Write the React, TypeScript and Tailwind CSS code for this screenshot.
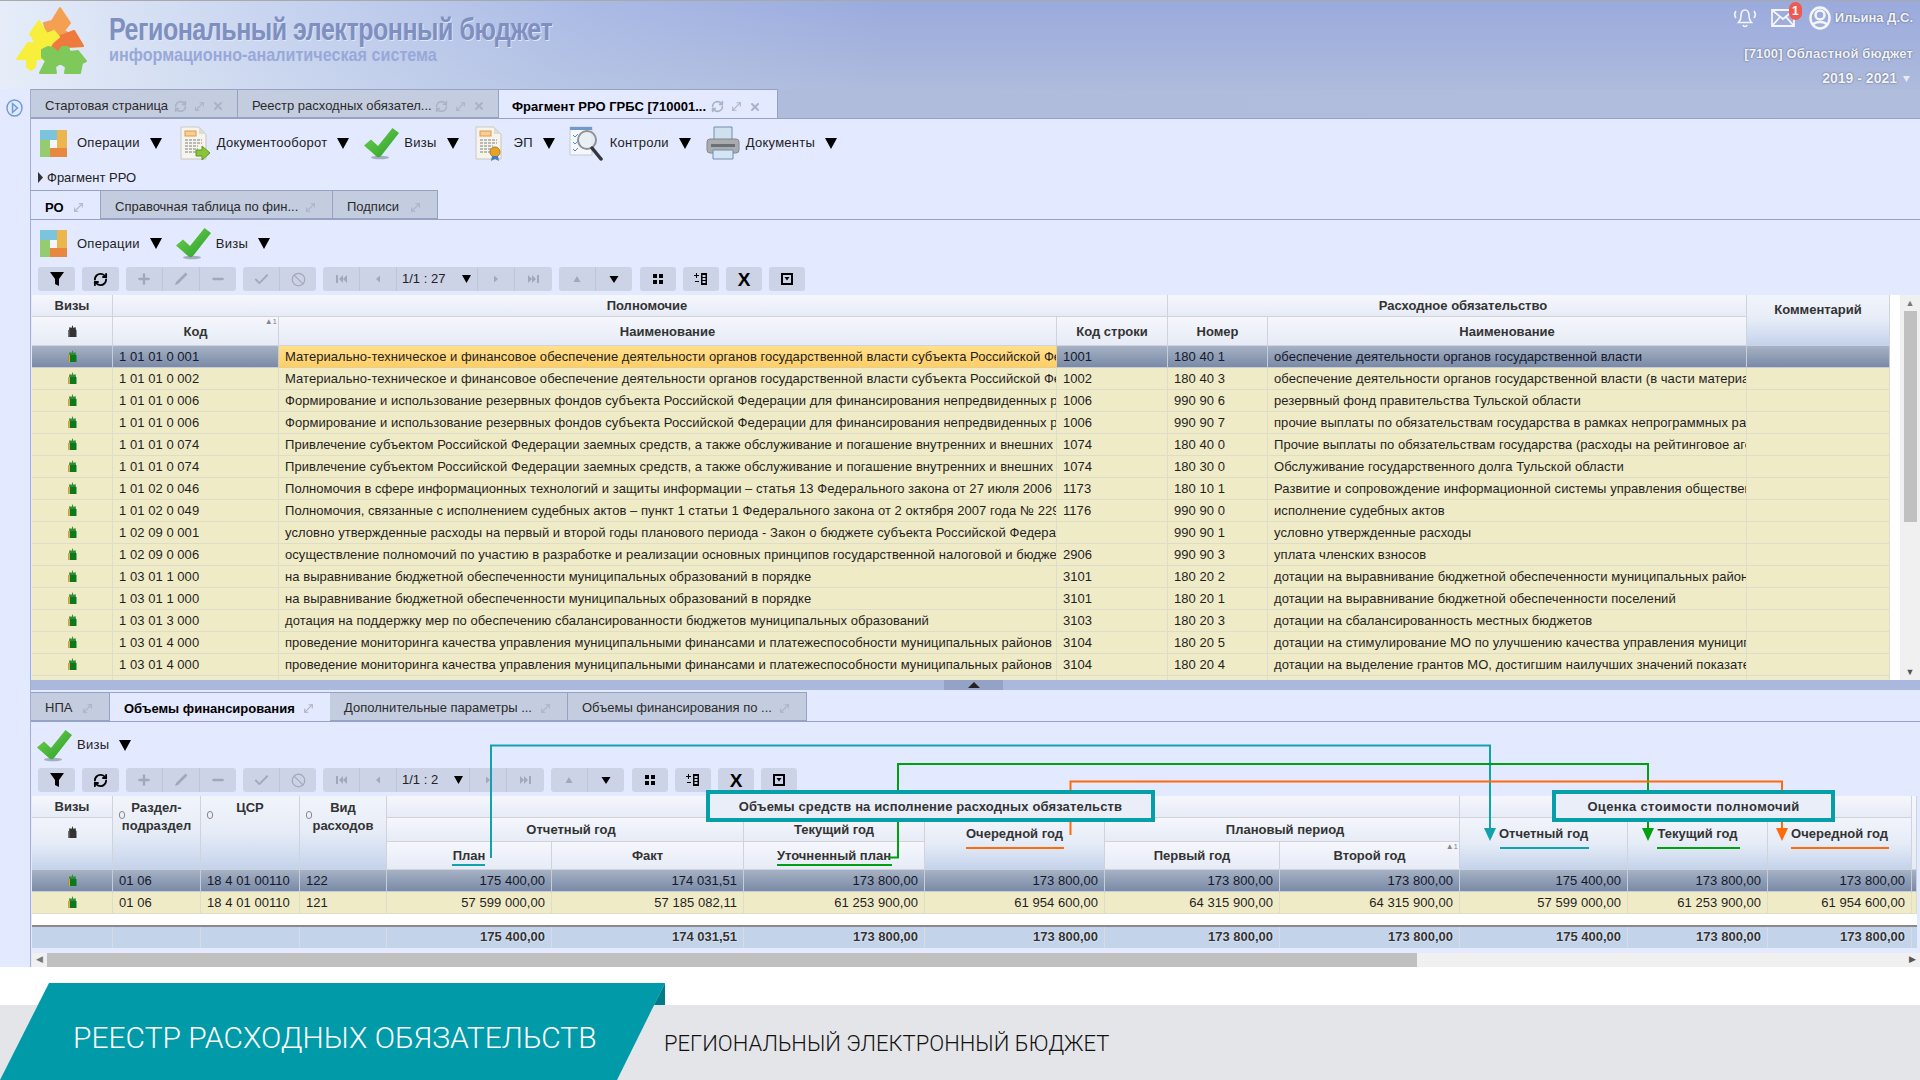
import type { ReactNode } from 'react';
import { RefreshCw, MoveDiagonal, X, Plus, Minus, Check, Ban } from 'lucide-react';

const UPPER_ROWS = [
  ['1 01 01 0 001', 'Материально-техническое и финансовое обеспечение деятельности органов государственной власти субъекта Российской Федерации', '1001', '180 40 1', 'обеспечение деятельности органов государственной власти'],
  ['1 01 01 0 002', 'Материально-техническое и финансовое обеспечение деятельности органов государственной власти субъекта Российской Федерации', '1002', '180 40 3', 'обеспечение деятельности органов государственной власти (в части материального обеспечения)'],
  ['1 01 01 0 006', 'Формирование и использование резервных фондов субъекта Российской Федерации для финансирования непредвиденных расходов', '1006', '990 90 6', 'резервный фонд правительства Тульской области'],
  ['1 01 01 0 006', 'Формирование и использование резервных фондов субъекта Российской Федерации для финансирования непредвиденных расходов', '1006', '990 90 7', 'прочие выплаты по обязательствам государства в рамках непрограммных расходов'],
  ['1 01 01 0 074', 'Привлечение субъектом Российской Федерации заемных средств, а также обслуживание и погашение внутренних и внешних  долговых обязательств', '1074', '180 40 0', 'Прочие выплаты по обязательствам государства (расходы на рейтинговое агентство)'],
  ['1 01 01 0 074', 'Привлечение субъектом Российской Федерации заемных средств, а также обслуживание и погашение внутренних и внешних  долговых обязательств', '1074', '180 30 0', 'Обслуживание государственного долга Тульской области'],
  ['1 01 02 0 046', 'Полномочия в сфере информационных технологий и защиты информации – статья 13 Федерального закона от 27 июля 2006 года', '1173', '180 10 1', 'Развитие и сопровождение информационной системы управления общественными финансами'],
  ['1 01 02 0 049', 'Полномочия, связанные с исполнением судебных актов – пункт 1 статьи 1 Федерального закона от 2 октября 2007 года № 229-ФЗ', '1176', '990 90 0', 'исполнение судебных актов'],
  ['1 02 09 0 001', 'условно утвержденные расходы на первый и второй годы планового периода -  Закон о бюджете субъекта Российской Федерации', '', '990 90 1', 'условно утвержденные расходы'],
  ['1 02 09 0 006', 'осуществление полномочий по участию в разработке и реализации основных принципов государственной налоговой и бюджетной политики', '2906', '990 90 3', 'уплата членских взносов'],
  ['1 03 01 1 000', 'на выравнивание бюджетной обеспеченности муниципальных образований в порядке', '3101', '180 20 2', 'дотации на выравнивание бюджетной обеспеченности муниципальных районов'],
  ['1 03 01 1 000', 'на выравнивание бюджетной обеспеченности муниципальных образований в порядке', '3101', '180 20 1', 'дотации на выравнивание бюджетной обеспеченности поселений'],
  ['1 03 01 3 000', 'дотация на поддержку мер по обеспечению сбалансированности бюджетов муниципальных образований', '3103', '180 20 3', 'дотации на сбалансированность местных бюджетов'],
  ['1 03 01 4 000', 'проведение мониторинга качества управления муниципальными финансами и платежеспособности муниципальных районов', '3104', '180 20 5', 'дотации на стимулирование МО по улучшению качества управления муниципальными финансами'],
  ['1 03 01 4 000', 'проведение мониторинга качества управления муниципальными финансами и платежеспособности муниципальных районов', '3104', '180 20 4', 'дотации на выделение грантов МО, достигшим наилучших значений показателей'],
  ['', '', '', '', ''],
];

const LOWER_ROWS = [
  ['01 06', '18 4 01 00110', '122', '175 400,00', '174 031,51', '173 800,00', '173 800,00', '173 800,00', '173 800,00', '175 400,00', '173 800,00', '173 800,00'],
  ['01 06', '18 4 01 00110', '121', '57 599 000,00', '57 185 082,11', '61 253 900,00', '61 954 600,00', '64 315 900,00', '64 315 900,00', '57 599 000,00', '61 253 900,00', '61 954 600,00'],
];

const LOWER_TOTALS = ['175 400,00', '174 031,51', '173 800,00', '173 800,00', '173 800,00', '173 800,00', '175 400,00', '173 800,00', '173 800,00'];

const HEAD = 'border-r border-b border-[#d0d3da] bg-gradient-to-b from-[#f5f7fc] to-[#e6ebf6] font-bold text-[#333] text-center p-0 pt-px relative';
const HEAD_TALL = 'border-r border-b border-[#d0d3da] bg-gradient-to-b from-[#f1f4fb] via-[#e6ecf7] to-[#c4d3eb] font-bold text-[#333] text-center p-0 relative';
const CELL = 'border-r border-b whitespace-nowrap overflow-hidden px-[6px] p-0 tracking-[0.05px]';
const SELECTED = 'border-[#c6ccd8] bg-gradient-to-b from-[#a6b2c4] to-[#7a8aa7] text-[#14182a]';
const YELLOW = 'border-[#deddc9] bg-[#f0ebc7] text-[#1f1f1f]';

function Triangle() {
  return (
    <svg width="12" height="11" viewBox="0 0 12 11" className="shrink-0">
      <path d="M0 0h12L6 11z" fill="#000" />
    </svg>
  );
}

function OperationsIcon() {
  return (
    <svg width="27" height="27" viewBox="0 0 27 27">
      <rect width="17" height="10" fill="#7cc3dc" />
      <rect x="17" width="10" height="18" fill="#ecb64e" />
      <rect y="10" width="10" height="17" fill="#94cc6f" />
      <rect x="10" y="18" width="17" height="9" fill="#e8873f" />
      <rect x="10" y="10" width="7" height="8" fill="#f4f6fb" />
    </svg>
  );
}

function CheckIcon() {
  return (
    <svg width="37" height="33" viewBox="0 0 37 33">
      <defs>
        <linearGradient id="chk" x1="0" y1="0" x2="1" y2="1">
          <stop offset="0" stopColor="#72d04c" />
          <stop offset="1" stopColor="#27a02c" />
        </linearGradient>
      </defs>
      <ellipse cx="17" cy="30.5" rx="9" ry="1.8" fill="#8a93a8" opacity="0.7" />
      <path d="M1 18.5 8 12.5 15 19 29.5 1 36 6 18 29c-1.500 1.800-3.500 1.800-5 0z" fill="url(#chk)" />
    </svg>
  );
}

function DocLines({ tail }: { tail: ReactNode }) {
  return (
    <svg width="31" height="35" viewBox="0 0 31 35">
      <path d="M1 1h18l7 7v25H1z" fill="#f6f4ec" stroke="#c9c8c0" />
      <path d="M19 1v7h7z" fill="#dcdcd6" />
      <rect x="5" y="5" width="11" height="5" fill="#f7cf95" stroke="#de9a48" />
      <path d="M5 14h17M5 17h17M5 20h13M5 23h13M5 26h11" stroke="#a7a7a2" strokeWidth="1.300" strokeDasharray="3 1" />
      {tail}
    </svg>
  );
}

function SearchIcon() {
  return (
    <svg width="36" height="35" viewBox="0 0 36 35">
      <path d="M1 1h22v28H1z" fill="#f5f7fb" stroke="#c5cad6" />
      <path d="M1 1h22v3H1z" fill="#6f9ac9" />
      <path d="M4 9l2 2 3-3M4 16l2 2 3-3M4 23l2 2 3-3" stroke="#4d8ccc" fill="none" />
      <circle cx="18" cy="14" r="9" fill="#e6edf3" fillOpacity="0.8" stroke="#8e9196" strokeWidth="2" />
      <path d="M23 22l9 11" stroke="#33363d" strokeWidth="3.500" strokeLinecap="round" />
    </svg>
  );
}

function PrinterIcon() {
  return (
    <svg width="34" height="34" viewBox="0 0 34 34">
      <path d="M8 1h18v14H8z" fill="#cfe0ef" stroke="#6f8fb0" />
      <rect x="1" y="13" width="32" height="14" rx="3" fill="#a9acaf" stroke="#85888c" />
      <rect x="5" y="18" width="24" height="3" fill="#6c6f74" />
      <path d="M7 24h20v9H7z" fill="#d5e5f3" stroke="#6f8fb0" />
    </svg>
  );
}

function MenuItem({ icon, boxClass, label, className }: { icon: ReactNode; boxClass: string; label: string; className?: string }) {
  return (
    <div className={`flex items-center ${className ?? ''}`}>
      <div className={boxClass}>{icon}</div>
      <span className="text-[#222] tracking-[0.25px]">{label}</span>
      <span className="ml-[10px]">
        <Triangle />
      </span>
    </div>
  );
}

function TabIcons({ refresh }: { refresh?: boolean }) {
  return (
    <span className="flex items-center gap-[6px] text-[#aab3c6]">
      {refresh && <RefreshCw size={13} strokeWidth={3} />}
      <MoveDiagonal size={13} strokeWidth={2} />
      {refresh && <X size={12} strokeWidth={4} />}
    </span>
  );
}

function Tab({ label, active, refresh, className }: { label: string; active?: boolean; refresh?: boolean; className: string }) {
  const look = active
    ? 'bg-[#e3e9fe] font-bold text-black border-t border-[#9aa6c8]'
    : 'bg-[#c4cddf] text-[#2a2a2a] border-t border-r border-b border-[#95a2c4]';
  return (
    <div className={`flex items-center justify-between h-full ${className} ${look}`}>
      <span className="whitespace-nowrap">{label}</span>
      <TabIcons refresh={refresh} />
    </div>
  );
}

function SvgGlyph({ d, fill }: { d: string; fill: string }) {
  return (
    <svg width="16" height="16" viewBox="0 0 16 16">
      <path d={d} fill={fill} />
    </svg>
  );
}

const GREY = '#a3a8b8';

function ToolBtn({ children, className }: { children: ReactNode; className?: string }) {
  return (
    <div className={`flex items-center justify-center h-full border-r border-[#c0c6da] last:border-r-0 ${className ?? 'flex-1'}`}>
      {children}
    </div>
  );
}

function ToolGroup({ children, className }: { children: ReactNode; className: string }) {
  return <div className={`flex h-full rounded-[3px] bg-[#cdd3e6] ${className}`}>{children}</div>;
}

function ButtonBar({ pagerClass, pagerMiddle, count }: { pagerClass: string; pagerMiddle: string; count: string }) {
  return (
    <div className="flex gap-[7px] h-[24px] pl-[7px] mb-[4px] shrink-0">
      <ToolGroup className="w-[37px]">
        <ToolBtn><SvgGlyph d="M1 1h14L10 8v7l-4-2V8z" fill="#000" /></ToolBtn>
      </ToolGroup>
      <ToolGroup className="w-[37px]">
        <ToolBtn><RefreshCw size={15} strokeWidth={3} color="#000" /></ToolBtn>
      </ToolGroup>
      <ToolGroup className="w-[110px]">
        <ToolBtn><Plus size={16} strokeWidth={3.500} color={GREY} /></ToolBtn>
        <ToolBtn><SvgGlyph d="M12.500 1.500l2 2L5 13l-3 1 1-3z" fill={GREY} /></ToolBtn>
        <ToolBtn><Minus size={16} strokeWidth={3.500} color={GREY} /></ToolBtn>
      </ToolGroup>
      <ToolGroup className="w-[73px]">
        <ToolBtn><Check size={17} strokeWidth={2.500} color={GREY} /></ToolBtn>
        <ToolBtn><Ban size={15} strokeWidth={2} color={GREY} /></ToolBtn>
      </ToolGroup>
      <ToolGroup className={pagerClass}>
        <ToolBtn className="w-[37px]"><SvgGlyph d="M3 4h2v8H3zM10 4v8L6 8zM14 4v8l-4-4z" fill={GREY} /></ToolBtn>
        <ToolBtn className="w-[37px]"><SvgGlyph d="M10 4.500v7L6 8z" fill={GREY} /></ToolBtn>
        <ToolBtn className={pagerMiddle}>
          <span className="flex-1 pl-[5px] text-[#222] whitespace-nowrap">{count}</span>
          <svg width="9" height="8" viewBox="0 0 9 8" className="mr-[6px]"><path d="M0 0h9L4.500 8z" fill="#000" /></svg>
        </ToolBtn>
        <ToolBtn className="w-[37px]"><SvgGlyph d="M6 4.500v7L10 8z" fill={GREY} /></ToolBtn>
        <ToolBtn className="w-[37px]"><SvgGlyph d="M2 4v8l4-4zM6 4v8l4-4zM11 4h2v8h-2z" fill={GREY} /></ToolBtn>
      </ToolGroup>
      <ToolGroup className="w-[73px]">
        <ToolBtn><SvgGlyph d="M8 5l3.500 6h-7z" fill={GREY} /></ToolBtn>
        <ToolBtn><SvgGlyph d="M3.500 5h9L8 12z" fill="#000" /></ToolBtn>
      </ToolGroup>
      <ToolGroup className="w-[36px] ml-px">
        <ToolBtn><SvgGlyph d="M3 3h4v4H3zM9 3h4v4H9zM3 9h4v4H3zM9 9h4v4H9z" fill="#000" /></ToolBtn>
      </ToolGroup>
      <ToolGroup className="w-[36px]">
        <ToolBtn><SvgGlyph d="M8 2h6v12H8zM9.500 4v2h3V4zM9.500 7v2h3V7zM9.500 10v2h3v-2zM1 4h2V2h1v2h2v1H4v2H3V5H1zM2 10h4v1H2z" fill="#000" /></ToolBtn>
      </ToolGroup>
      <ToolGroup className="w-[36px]">
        <ToolBtn><span className="font-bold text-[19px] text-black leading-none">X</span></ToolBtn>
      </ToolGroup>
      <ToolGroup className="w-[36px]">
        <ToolBtn><SvgGlyph d="M2 2h12v12H2zM4 4v8h8V4zM5.500 6h5L8 9.500z" fill="#000" /></ToolBtn>
      </ToolGroup>
    </div>
  );
}

function Stamp({ dark }: { dark?: boolean }) {
  return (
    <svg width="11" height="13" viewBox="0 0 11 13" className="mx-auto block">
      <path d="M5.500 0l1 3 2-1 .5 3H2l.5-3 2 1z" fill={dark ? '#333' : '#2f8d35'} />
      <rect x="1.500" y="5" width="8" height="7" fill={dark ? '#333' : '#0b7a1e'} />
      <rect x="1.500" y="5" width="1.500" height="7" fill={dark ? '#555' : '#e6a53a'} />
    </svg>
  );
}

function SortMark() {
  return <span className="absolute right-[1px] top-[1px] text-[8px] leading-none text-[#888] font-normal">▲1</span>;
}

function RingMark() {
  return <span className="absolute left-[6px] top-[15px] w-[6px] h-[8px] rounded-full border border-[#888]" />;
}

function Logo() {
  return (
    <svg width="90" height="76" viewBox="0 0 90 76" className="absolute left-0 top-0">
      <g strokeLinejoin="round" strokeWidth="2">
        <path d="M60 7 70 22 64 30 70 33 74 30 83 45 62 46 58 53 52 46 50 40 57 36 54 30 47 33 44 22 52 20z" fill="#f4a052" stroke="#f4a052" />
        <path d="M58 36 74 30 83 45 62 46 58 53 52 46z" fill="#ee7a3e" stroke="#ee7a3e" />
        <path d="M39 20 47 33 54 30 59 36 52 42 49 48 43 47 40 52 45 58 36 58 35 66 31 69 27 66 27 58 17 58 28 42 35 43 33 37 30 33z" fill="#f8ee3c" stroke="#f8ee3c" />
        <path d="M42 49 48 46 53 47 58 52 62 46 68 46 70 51 78 50 86 60 82 62 80 72 65 72 66 66 60 62 55 66 56 72 40 72 46 60 42 56z" fill="#7fc85a" stroke="#7fc85a" />
      </g>
    </svg>
  );
}

function BellIcon() {
  return (
    <svg width="24" height="22" viewBox="0 0 24 22" fill="none" stroke="#f4f5fa" strokeWidth="1.600">
      <path d="M12 3c-3 0-4 2.500-4 6 0 3-1 5-2.500 6.500h13C17 14 16 12 16 9c0-3.500-1-6-4-6z" />
      <path d="M10 18c.5 2 3.500 2 4 0M3 4C1.500 6 1.500 9 3 11M21 4c1.500 2 1.500 5 0 7" />
    </svg>
  );
}

function UpperTable() {
  return (
    <table className="table-fixed border-separate border-spacing-0 w-[1858px]">
      <colgroup>
        <col className="w-[81px]" />
        <col className="w-[166px]" />
        <col className="w-[778px]" />
        <col className="w-[111px]" />
        <col className="w-[100px]" />
        <col className="w-[479px]" />
        <col className="w-[143px]" />
      </colgroup>
      <thead>
        <tr className="h-[22px]">
          <th className={HEAD}>Визы</th>
          <th className={`${HEAD} pl-[14px]`} colSpan={3}>Полномочие</th>
          <th className={`${HEAD} pl-[12px]`} colSpan={2}>Расходное обязательство</th>
          <th className={`${HEAD_TALL} align-top pt-[5px]`} rowSpan={2}>Комментарий</th>
        </tr>
        <tr className="h-[29px]">
          <th className={HEAD}><Stamp dark /></th>
          <th className={HEAD}>Код<SortMark /></th>
          <th className={HEAD}>Наименование</th>
          <th className={HEAD}>Код строки</th>
          <th className={HEAD}>Номер</th>
          <th className={HEAD}>Наименование</th>
        </tr>
      </thead>
      <tbody>
        {UPPER_ROWS.map((row, i) => {
          const look = i === 0 ? SELECTED : YELLOW;
          return (
            <tr key={i} className="h-[22px]">
              <td className={`${CELL} ${look}`}>{row[0] !== '' && <Stamp />}</td>
              <td className={`${CELL} ${look}`}>{row[0]}</td>
              <td className={`${CELL} ${i === 0 ? 'border-[#e8cf90] bg-gradient-to-b from-[#ffe08c] to-[#ffce66] text-[#222]' : look}`}>{row[1]}</td>
              <td className={`${CELL} ${look}`}>{row[2]}</td>
              <td className={`${CELL} ${look}`}>{row[3]}</td>
              <td className={`${CELL} ${look}`}>{row[4]}</td>
              <td className={`${CELL} ${look}`} />
            </tr>
          );
        })}
      </tbody>
    </table>
  );
}

function LowerTable() {
  return (
    <table className="table-fixed border-separate border-spacing-0 w-[1885px]">
      <colgroup>
        <col className="w-[81px]" />
        <col className="w-[88px]" />
        <col className="w-[99px]" />
        <col className="w-[87px]" />
        <col className="w-[165px]" />
        <col className="w-[192px]" />
        <col className="w-[181px]" />
        <col className="w-[180px]" />
        <col className="w-[175px]" />
        <col className="w-[180px]" />
        <col className="w-[168px]" />
        <col className="w-[140px]" />
        <col className="w-[144px]" />
        <col className="w-[5px]" />
      </colgroup>
      <thead>
        <tr className="h-[22px]">
          <th className={HEAD}>Визы</th>
          <th className={`${HEAD_TALL} align-top pt-[3px] leading-[18px]`} rowSpan={3}><RingMark />Раздел-<br />подраздел</th>
          <th className={`${HEAD_TALL} align-top pt-[3px] leading-[18px]`} rowSpan={3}><RingMark />ЦСР</th>
          <th className={`${HEAD_TALL} align-top pt-[3px] leading-[18px]`} rowSpan={3}><RingMark />Вид<br />расходов</th>
          <th className={HEAD} colSpan={6} />
          <th className={HEAD} colSpan={3} />
          <th className={HEAD} rowSpan={3} />
        </tr>
        <tr className="h-[24px]">
          <th className={`${HEAD_TALL} align-top pt-[8px]`} rowSpan={2}><Stamp dark /></th>
          <th className={`${HEAD} pl-[12px]`} colSpan={2}>Отчетный год</th>
          <th className={HEAD}>Текущий год</th>
          <th className={`${HEAD_TALL} align-top pt-[6px]`} rowSpan={2}>Очередной год</th>
          <th className={`${HEAD} pl-[6px]`} colSpan={2}>Плановый период</th>
          <th className={`${HEAD_TALL} align-top pt-[6px]`} rowSpan={2}>Отчетный год</th>
          <th className={`${HEAD_TALL} align-top pt-[6px]`} rowSpan={2}>Текущий год</th>
          <th className={`${HEAD_TALL} align-top pt-[6px]`} rowSpan={2}>Очередной год</th>
        </tr>
        <tr className="h-[28px]">
          <th className={HEAD}>План</th>
          <th className={HEAD}>Факт</th>
          <th className={HEAD}>Уточненный план</th>
          <th className={HEAD}>Первый год</th>
          <th className={HEAD}>Второй год<SortMark /></th>
        </tr>
      </thead>
      <tbody>
        {LOWER_ROWS.map((row, i) => {
          const look = i === 0 ? SELECTED : YELLOW;
          return (
            <tr key={i} className={i === 0 ? 'h-[21px]' : 'h-[22px]'}>
              <td className={`${CELL} ${look}`}><Stamp /></td>
              {row.map((value, c) => (
                <td key={c} className={`${CELL} ${look} pt-px ${c > 2 ? 'text-right' : ''}`}>{value}</td>
              ))}
              <td className={`${CELL} ${look}`} />
            </tr>
          );
        })}
        <tr className="h-[13px]">
          <td colSpan={14} className="bg-white border-b-2 border-[#8a8a8a] p-0" />
        </tr>
        <tr className="h-[21px]">
          <td colSpan={4} className="bg-[#c3d3ea] p-0">
            <div className="grid grid-cols-[81px_88px_99px_87px] h-[21px]">
              <span className="border-r border-[#d5dce8]" />
              <span className="border-r border-[#d5dce8]" />
              <span className="border-r border-[#d5dce8]" />
              <span className="border-r border-[#d5dce8]" />
            </div>
          </td>
          {LOWER_TOTALS.map((value, c) => (
            <td key={c} className="border-r border-[#d5dce8] bg-[#c3d3ea] text-right font-bold text-[#333] px-[6px] p-0 whitespace-nowrap [text-shadow:0_0_2px_#fff]">
              {value}
            </td>
          ))}
          <td className="bg-[#c3d3ea] p-0" />
        </tr>
      </tbody>
    </table>
  );
}

function Annotations() {
  return (
    <svg width="1920" height="1080" viewBox="0 0 1920 1080" fill="none" className="absolute left-0 top-0 pointer-events-none">
      <path d="M491 858V745.500H1490V830" stroke="#12a2ad" strokeWidth="2" />
      <path d="M1484 828h12l-6 13z" fill="#12a2ad" />
      <path d="M888 857.500H898V764H1648V830" stroke="#00a010" strokeWidth="2" />
      <path d="M1642 828h12l-6 13z" fill="#00a010" />
      <path d="M1070.500 835V781.500H1782V830" stroke="#ff6a0a" strokeWidth="2" />
      <path d="M1776 828h12l-6 13z" fill="#ff6a0a" />
      <path d="M452 865h33" stroke="#12a2ad" strokeWidth="2" />
      <path d="M777 865h115" stroke="#00a010" strokeWidth="2" />
      <path d="M966 848h98" stroke="#ff6a0a" strokeWidth="2" />
      <path d="M1500 848h89" stroke="#12a2ad" strokeWidth="2" />
      <path d="M1657 848h83" stroke="#00a010" strokeWidth="2" />
      <path d="M1791 848h98" stroke="#ff6a0a" strokeWidth="2" />
    </svg>
  );
}

export default function App() {
  return (
    <div className="relative w-[1920px] h-[1080px] overflow-hidden bg-white text-[13px] font-['Liberation_Sans','Noto_Sans',sans-serif]">
      {/* Banner */}
      <div className="relative h-[89px] flex justify-end border-t border-[#a9a9a9] bg-[linear-gradient(100deg,#eef4fce6_0%,#dbe6f8b3_14%,#c3d2f166_30%,#b0bfe800_46%),linear-gradient(180deg,#9aaadd,#aebbdc)]">
        <Logo />
        <div className="absolute left-[109px] top-[10px] origin-left scale-x-[0.808] text-[31px] leading-[38px] font-bold text-[#7e8fc0] [text-shadow:1px_1px_0_#dfe6f6] tracking-[-0.6px] whitespace-nowrap">
          Региональный электронный бюджет
        </div>
        <div className="absolute left-[109px] top-[42px] origin-left scale-x-[0.851] text-[19px] leading-[24px] font-bold text-[#98a8d8] whitespace-nowrap">
          информационно-аналитическая система
        </div>
        <div className="flex flex-col items-end pr-[7px] text-[#f1f2f6] font-bold [text-shadow:0_0_2px_#4a5470]">
          <div className="flex items-center h-[38px]">
            <BellIcon />
            <svg width="24" height="20" viewBox="0 0 24 20" fill="none" stroke="#f4f5fa" strokeWidth="1.800" className="ml-[14px]">
              <path d="M1 2h22v16H1zM1 2l11 9 11-9M1 18l8-9M23 18l-8-9" />
            </svg>
            <span className="relative -ml-[6px] -mt-[14px] w-[13px] h-[18px] rounded-full bg-[#ef5a50] text-white text-[12px] leading-[18px] text-center [text-shadow:none]">1</span>
            <svg width="22" height="24" viewBox="0 0 22 24" fill="none" stroke="#f4f5fa" strokeWidth="2.500" className="ml-[7px] mr-[4px]">
              <ellipse cx="11" cy="12" rx="9.500" ry="10.500" />
              <circle cx="11" cy="9" r="4.500" />
              <path d="M4 19c2-4 12-4 14 0" />
            </svg>
            <span>Ильина Д.С.</span>
          </div>
          <div className="mt-[9px] tracking-[0.16px]">[7100] Областной бюджет</div>
          <div className="flex items-center mt-[5px] text-[14px]">
            2019 - 2021
            <svg width="7" height="6" viewBox="0 0 7 6" className="ml-[6px] mr-[3px]"><path d="M0 0h7L3.500 6z" fill="#e8eaf2" /></svg>
          </div>
        </div>
      </div>

      {/* Workspace */}
      <div className="flex h-[878px] bg-[#e3e9fe]">
        <div className="w-[31px] shrink-0 border-r border-[#a3afd0] pt-[10px] pl-[6px]">
          <svg width="17" height="18" viewBox="0 0 17 18" fill="none" stroke="#6c9bd6" strokeWidth="1.400">
            <ellipse cx="8.500" cy="9" rx="7.500" ry="8" />
            <path d="M6.500 4.500l5 4.500-5 4.500z" fill="#cfe0f6" />
          </svg>
        </div>
        <div className="flex-1 min-w-0 flex flex-col">
          {/* Main tabs */}
          <div className="flex h-[30px] shrink-0 bg-gradient-to-r from-[#aebbdb] to-[#b0bddc] border-b border-[#95a2c4]">
            <Tab label="Стартовая страница" refresh className="w-[207px] pl-[14px] pr-[13px] pt-[5px]" />
            <Tab label="Реестр расходных обязател..." refresh className="w-[261px] pl-[14px] pr-[13px] pt-[5px]" />
            <Tab label="Фрагмент РРО ГРБС [710001..." active refresh className="w-[279px] pl-[13px] pr-[16px] pt-[5px] border-r border-[#95a2c4] -mb-px" />
          </div>

          {/* Main toolbar */}
          <div className="flex items-center h-[48px] shrink-0 pl-[9px]">
            <MenuItem icon={<OperationsIcon />} boxClass="w-[37px]" label="Операции" />
            <MenuItem
              className="ml-[18px]"
              icon={<DocLines tail={<path d="M16 24h6v-4l8 7-8 7v-4h-6z" fill="#8ac43a" stroke="#5c9a20" />} />}
              boxClass="w-[37px]"
              label="Документооборот"
            />
            <MenuItem className="ml-[14px]" icon={<CheckIcon />} boxClass="w-[41px]" label="Визы" />
            <MenuItem
              className="ml-[16px]"
              icon={<DocLines tail={<g><circle cx="20" cy="26" r="5" fill="#e6a32c" stroke="#b87b18" /><path d="M17 30l-1 5 4-2 4 2-1-5" fill="#3f7cc0" /></g>} />}
              boxClass="w-[39px]"
              label="ЭП"
            />
            <MenuItem className="ml-[14px]" icon={<SearchIcon />} boxClass="w-[41px]" label="Контроли" />
            <MenuItem className="ml-[15px]" icon={<PrinterIcon />} boxClass="w-[40px]" label="Документы" />
          </div>

          {/* Fragment title */}
          <div className="flex items-center gap-[4px] h-[23px] shrink-0 pl-[7px] pb-[2px] text-[#222]">
            <svg width="5" height="11" viewBox="0 0 5 11"><path d="M0 0l5 5.500L0 11z" fill="#333" /></svg>
            Фрагмент РРО
          </div>

          {/* Section tabs */}
          <div className="flex h-[30px] shrink-0 border-b border-[#95a2c4]">
            <Tab label="РО" active className="w-[70px] pl-[14px] pr-[15px] pt-[5px] border-r border-[#95a2c4] -mb-px" />
            <Tab label="Справочная таблица по фин..." className="w-[232px] pl-[14px] pr-[15px] pt-[5px]" />
            <Tab label="Подписи" className="w-[105px] pl-[14px] pr-[15px] pt-[5px]" />
          </div>

          {/* Section toolbar */}
          <div className="flex items-center h-[47px] shrink-0 pl-[9px]">
            <MenuItem icon={<OperationsIcon />} boxClass="w-[37px]" label="Операции" />
            <MenuItem className="ml-[13px]" icon={<CheckIcon />} boxClass="w-[41px]" label="Визы" />
          </div>

          <ButtonBar pagerClass="w-[229px]" pagerMiddle="w-[81px]" count="1/1 : 27" />

          {/* Upper grid */}
          <div className="flex h-[385px] shrink-0 pl-px overflow-hidden">
            <div className="w-[1858px] overflow-hidden shrink-0">
              <UpperTable />
            </div>
            <div className="w-[10px] bg-white" />
            <div className="flex-1 flex flex-col items-center bg-[#f0f0f0]">
              <span className="h-[16px] leading-[16px] text-[9px] text-[#777]">▲</span>
              <div className="w-[13px] h-[211px] bg-[#c0c0c0]" />
              <span className="mt-auto h-[16px] leading-[16px] text-[9px] text-[#555]">▼</span>
            </div>
          </div>

          {/* Splitter */}
          <div className="flex justify-center h-[10px] shrink-0 pr-[4px] mb-[2px] bg-[#a9b8dc]">
            <div className="w-[59px] h-full flex items-center justify-center bg-[#93a2c6]">
              <svg width="12" height="6" viewBox="0 0 12 6"><path d="M6 0l6 6H0z" fill="#222" /></svg>
            </div>
          </div>

          {/* Lower tabs */}
          <div className="flex h-[30px] shrink-0 border-b border-[#95a2c4]">
            <Tab label="НПА" className="w-[79px] pl-[14px] pr-[15px] pt-[3px]" />
            <Tab label="Объемы финансирования" active className="w-[220px] pl-[14px] pr-[15px] pt-[3px] -mb-px" />
            <Tab label="Дополнительные параметры ..." className="w-[238px] pl-[14px] pr-[15px] pt-[3px]" />
            <Tab label="Объемы финансирования по ..." className="w-[239px] pl-[14px] pr-[15px] pt-[3px]" />
          </div>

          {/* Lower toolbar */}
          <div className="flex items-center h-[46px] shrink-0 pl-[5px]">
            <MenuItem icon={<CheckIcon />} boxClass="w-[41px]" label="Визы" />
          </div>

          <ButtonBar pagerClass="w-[221px]" pagerMiddle="w-[73px]" count="1/1 : 2" />

          {/* Lower grid */}
          <div className="h-[157px] shrink-0 pl-px overflow-hidden">
            <LowerTable />
          </div>
          <div className="flex items-center h-[14px] shrink-0 ml-px bg-[#f0f0f0]">
            <span className="w-[15px] text-center text-[9px] text-[#777]">◀</span>
            <div className="w-[1370px] h-full bg-[#c0c0c0]" />
            <span className="ml-auto mr-[4px] text-[9px] text-[#555]">▶</span>
          </div>
        </div>
      </div>

      {/* Footer */}
      <div className="flex flex-col h-[113px]">
        <div className="h-[38px] bg-white" />
        <div className="flex-1 flex items-center pl-[664px] pt-[1px] bg-[#e4e5e8] text-[22px] text-[#111] whitespace-nowrap font-['Roboto',sans-serif] font-light">
          РЕГИОНАЛЬНЫЙ ЭЛЕКТРОННЫЙ БЮДЖЕТ
        </div>
      </div>

      <div className="absolute left-0 top-[983px] w-[665px] h-[97px] flex items-center pl-[73px] pt-[11px] bg-[#009aa8] text-white text-[30px] whitespace-nowrap font-['Roboto',sans-serif] font-light [clip-path:polygon(49px_0,665px_0,617px_97px,0_97px)]">
        РЕЕСТР РАСХОДНЫХ ОБЯЗАТЕЛЬСТВ
      </div>
      <div className="absolute left-[654px] top-[983px] w-[11px] h-[22px] bg-[#007b88] [clip-path:polygon(100%_0,100%_100%,0_100%)]" />

      <Annotations />

      {/* Callouts */}
      <div className="absolute left-[706px] top-[790px] w-[449px] h-[32px] flex items-center justify-center pt-px border-4 border-[#049fa9] bg-[#e9eef9] font-bold text-[#333] tracking-[0.12px]">
        Объемы средств на исполнение расходных обязательств
      </div>
      <div className="absolute left-[1552px] top-[790px] w-[283px] h-[32px] flex items-center justify-center pt-px border-4 border-[#049fa9] bg-[#e9eef9] font-bold text-[#333] tracking-[0.37px]">
        Оценка стоимости полномочий
      </div>
    </div>
  );
}
